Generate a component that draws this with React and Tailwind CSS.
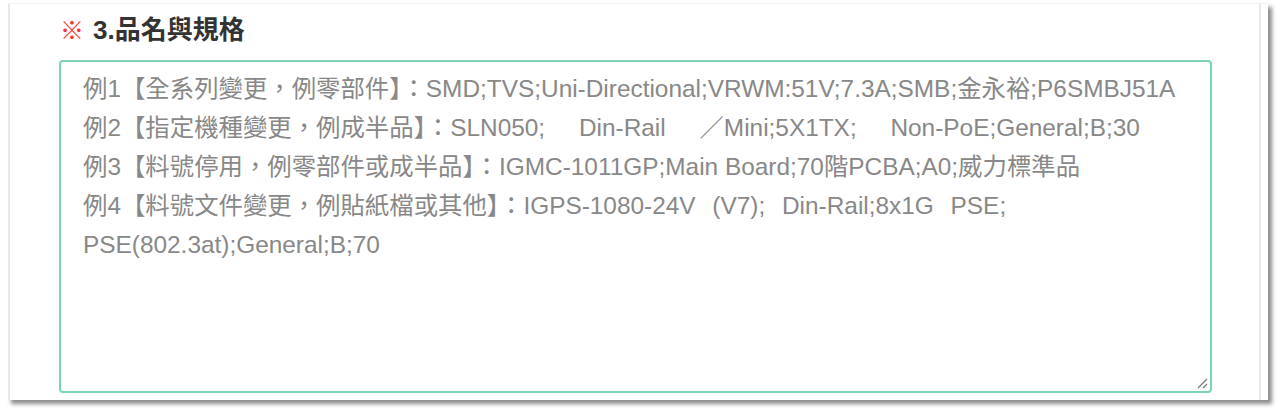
export default function App() {
  const lines = [
    { t: "例1【全系列變更，例零部件】：SMD;TVS;Uni-Directional;VRWM:51V;7.3A;SMB;金永裕;P6SMBJ51A", ws: "" },
    { t: "例2【指定機種變更，例成半品】：SLN050; Din-Rail ／Mini;5X1TX; Non-PoE;General;B;30", ws: "[word-spacing:27px]" },
    { t: "例3【料號停用，例零部件或成半品】：IGMC-1011GP;Main Board;70階PCBA;A0;威力標準品", ws: "" },
    { t: "例4【料號文件變更，例貼紙檔或其他】：IGPS-1080-24V (V7); Din-Rail;8x1G PSE;", ws: "[word-spacing:10px]" },
    { t: "PSE(802.3at);General;B;70", ws: "" },
  ];

  return (
    <div
      className="w-[1281px] h-[414px] bg-white pl-[7px] pt-[3px]"
      style={{ fontFamily: '"Liberation Sans", "Noto Sans CJK TC", sans-serif' }}
    >
      {/* Window frame */}
      <div className="w-[1261px] h-[397px] bg-white shadow-[4px_4px_4px_rgba(0,0,0,0.45)] border-t border-[#f2f2f2]">
        {/* Panel */}
        <div className="w-[1253px] h-full ml-[1px] border-l-2 border-r-2 border-[#e8e8e8] pl-[49px] pr-[47px]">
          {/* Title */}
          <div className="flex items-center h-[56px] pb-[3px] pl-[1px] text-[26px] font-bold text-[#333]">
            <span className="text-[#ff3030] text-[24px] mr-[9px]">※</span>
            <span>3.品名與規格</span>
          </div>

          {/* Textarea */}
          <div className="relative h-[333px] border-2 border-[#7dd4b1] rounded-[4px] pl-[22px] pt-[7px] text-[24.4px] leading-[39px] text-[#888]">
            {lines.map((l, i) => (
              <div key={i} className={`whitespace-nowrap ${l.ws}`}>
                {l.t}
              </div>
            ))}
            <svg
              className="absolute right-[2px] bottom-[2px]"
              width="12"
              height="12"
              viewBox="0 0 12 12"
            >
              <path d="M11 2 L2 11 M11 7 L7 11" stroke="#777" strokeWidth="1.2" />
            </svg>
          </div>
        </div>
      </div>
    </div>
  );
}
